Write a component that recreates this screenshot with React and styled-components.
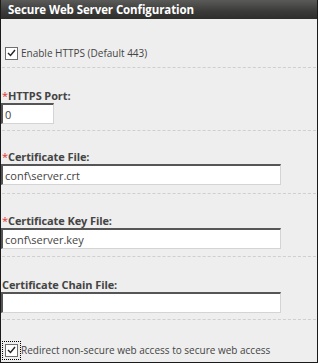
import styled, { createGlobalStyle } from "styled-components";

const Global = createGlobalStyle`
  html, body {
    margin: 0;
    padding: 0;
    background: #ffffff;
  }
  body {
    font-family: "Open Sans", "DejaVu Sans", sans-serif;
  }
`;

const Panel = styled.div`
  width: 318px;
  height: 363px;
  box-sizing: border-box;
  border: 1px solid #1a1a1a;
  border-top: none;
  background: #eeeeee;
  overflow: hidden;
`;

const Header = styled.div`
  height: 19px;
  margin: 0 -1px;
  background: linear-gradient(#5a5a58, #3a3a38 60%, #2e2e2c);
  color: #ffffff;
  font-size: 11.5px;
  font-weight: 700;
  line-height: 19px;
  padding-left: 8px;
  letter-spacing: -0.1px;
`;

const Section = styled.div`
  box-sizing: border-box;
  height: ${(p) => p.h}px;
  display: flex;
  flex-direction: column;
  justify-content: flex-end;
  padding: ${(p) => p.pad || "0"};
  border-bottom: ${(p) => (p.last ? "none" : "1px dashed #cfcfcf")};
  margin: 0 1px;
`;

const CheckRow = styled.label`
  display: flex;
  align-items: center;
  gap: 3px;
  font-size: 10px;
  color: #444;
`;

const Box = styled.span`
  width: 13px;
  height: 13px;
  flex-shrink: 0;
  box-sizing: border-box;
  border: 1px solid #6f6f6f;
  background: #fff;
  display: flex;
  align-items: center;
  justify-content: center;
  outline: ${(p) => (p.focus ? "1px dotted #000" : "none")};
  outline-offset: 2px;
`;

const Label = styled.div`
  font-size: 11px;
  font-weight: 700;
  color: #444;
  line-height: 15px;
  letter-spacing: -0.1px;
`;

const Star = styled.span`
  color: #e03030;
  font-weight: 400;
`;

const Input = styled.input`
  display: block;
  box-sizing: border-box;
  width: ${(p) => p.w}px;
  height: 21px;
  margin-left: -1px;
  border-style: solid;
  border-width: 2px 1px 1px 2px;
  border-color: #555 #d4d4d4 #d4d4d4 #555;
  background: #fff;
  font-family: inherit;
  font-size: 11px;
  color: #444;
  padding: 0 2px;
  outline: none;
`;

const Check = () => (
  <svg width="9" height="8" viewBox="0 0 9 8">
    <path d="M1 4 L3.5 6.5 L8 1" fill="none" stroke="#222" strokeWidth="1.4" />
  </svg>
);

const Field = ({ label, required, value, w, bottom }) => (
  <Section h={63} pad={`0 0 ${bottom}px 0`}>
    <Label>
      {required && <Star>*</Star>}
      {label}
    </Label>
    <Input w={w} defaultValue={value} />
  </Section>
);

export default function App() {
  return (
    <>
      <Global />
      <Panel>
        <Header>Secure Web Server Configuration</Header>
        <Section h={49} pad="0 0 7px 3px">
          <CheckRow>
            <Box>
              <Check />
            </Box>
            Enable HTTPS (Default 443)
          </CheckRow>
        </Section>
        <Field label="HTTPS Port:" required value="0" w={53} bottom={6} />
        <Field label="Certificate File:" required value="conf\server.crt" w={280} bottom={8} />
        <Field label="Certificate Key File:" required value="conf\server.key" w={280} bottom={7} />
        <Field label="Certificate Chain File:" value="" w={280} bottom={6} />
        <Section h={42} pad="0 0 5px 3px" last>
          <CheckRow>
            <Box focus>
              <Check />
            </Box>
            Redirect non-secure web access to secure web access
          </CheckRow>
        </Section>
      </Panel>
    </>
  );
}
